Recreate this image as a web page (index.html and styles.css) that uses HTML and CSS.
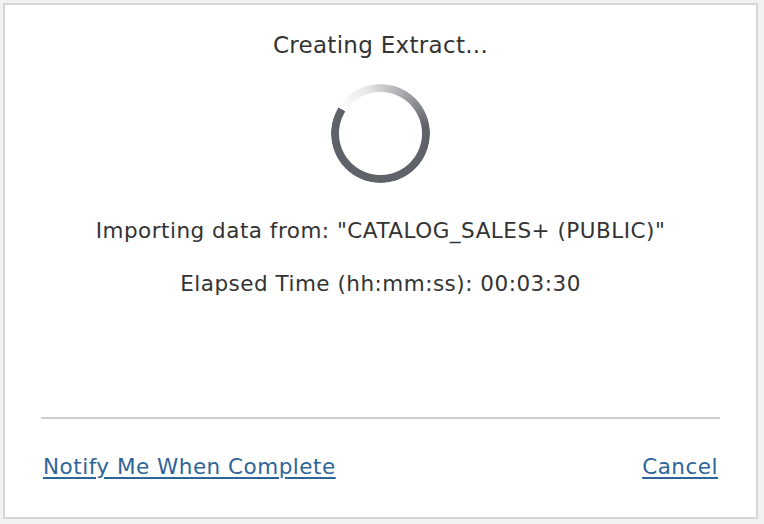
FILE: index.html
```html
<!DOCTYPE html>
<html lang="en">
<head>
  <meta charset="UTF-8" />
  <meta name="viewport" content="width=device-width, initial-scale=1.0" />
  <title>Creating Extract</title>
  <link rel="stylesheet" href="styles.css">
</head>
<body>
  <div class="dialog">
    <div class="dialog-body">
      <h1 class="title">Creating Extract...</h1>
      <div class="spinner"></div>
      <p class="status">Importing data from: "CATALOG_SALES+ (PUBLIC)"</p>
      <p class="status">Elapsed Time (hh:mm:ss): 00:03:30</p>
    </div>
    <div class="dialog-footer">
      <a href="#" class="link">Notify Me When Complete</a>
      <a href="#" class="link">Cancel</a>
    </div>
  </div>
</body>
</html>
```

FILE: styles.css
```css
* {
  box-sizing: border-box;
  margin: 0;
  padding: 0;
}

body {
  font-family: 'DejaVu Sans', 'Open Sans', sans-serif;
  background: #f2f2f2;
  color: #333;
  padding: 3px 0 0 3px;
  height: 524px;
  overflow: hidden;
}

.dialog {
  width: 755px;
  height: 516px;
  background: #fff;
  border: 2px solid #d6d6d6;
  display: flex;
  flex-direction: column;
}

.dialog-body {
  flex: 1;
  display: flex;
  flex-direction: column;
  align-items: center;
}

.title {
  font-weight: normal;
  font-size: 23px;
  line-height: 28px;
  letter-spacing: 0.3px;
  margin-top: 26px;
  color: #333;
}

.spinner {
  width: 99px;
  height: 99px;
  margin-top: 25px;
  border-radius: 50%;
  background: conic-gradient(from 302deg, rgba(95, 98, 105, 0) 0deg, rgba(95, 98, 105, 0.15) 40deg, #5f6269 140deg, #5f6269 360deg);
  -webkit-mask: radial-gradient(circle, transparent 41px, #000 42px);
  mask: radial-gradient(circle, transparent 41px, #000 42px);
}

.status {
  font-size: 21.5px;
  line-height: 24px;
  letter-spacing: 0.5px;
  margin-top: 36px;
}

.status + .status {
  margin-top: 29px;
}

.dialog-footer {
  margin: 0 36px 0 36px;
  border-top: 2px solid #cfcfcf;
  height: 100px;
  display: flex;
  justify-content: space-between;
  align-items: flex-start;
  padding: 35px 2px 0 2px;
}

.link {
  font-size: 21.5px;
  line-height: 26px;
  letter-spacing: 0.5px;
  color: #2e6599;
  text-decoration: underline;
  text-decoration-thickness: 2px;
  text-underline-offset: 3px;
}
```
